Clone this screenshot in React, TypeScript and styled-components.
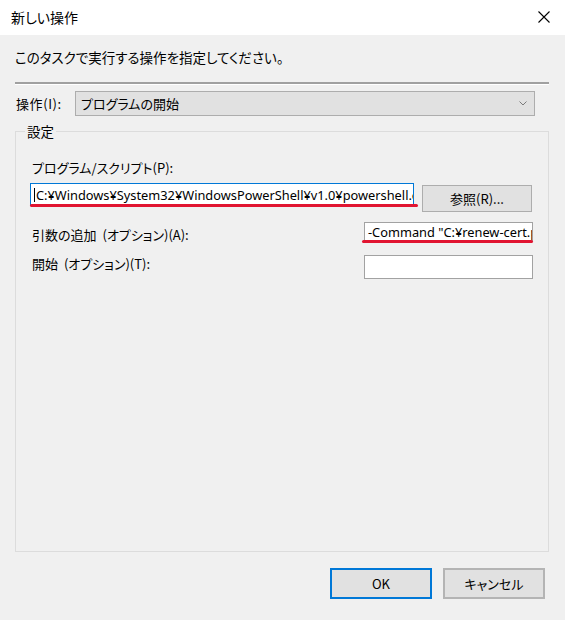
import React from "react";
import styled, { createGlobalStyle } from "styled-components";

const GlobalStyle = createGlobalStyle`
  html, body { margin: 0; padding: 0; background: #f0f0f0; }
  body {
    font-family: "Noto Sans CJK JP", "Noto Sans", sans-serif;
    font-feature-settings: "palt";
    color: #000;
  }
`;

const Window = styled.div`
  width: 565px;
  height: 620px;
  display: flex;
  flex-direction: column;
  background: #f0f0f0;
  overflow: hidden;
`;

const TitleBar = styled.div`
  height: 35px;
  flex: none;
  background: #fff;
  display: flex;
  align-items: center;
  justify-content: space-between;
  padding: 0 15px 2px 11px;
  box-sizing: border-box;
  font-size: 14px;
`;

const CloseIcon = styled.svg`
  width: 12px;
  height: 12px;
  display: block;
`;

const Body = styled.div`
  flex: 1;
  display: flex;
  flex-direction: column;
  padding: 0 16px 0 15px;
`;

const Instruction = styled.div`
  margin-top: 12px;
  line-height: 20px;
  font-size: 13.5px;
`;

const Separator = styled.div`
  margin-top: 15px;
  height: 0;
  border-top: 2px solid #a0a0a0;
  border-bottom: 1px solid #ffffff;
`;

const ActionRow = styled.div`
  margin-top: 6px;
  display: flex;
  align-items: center;
  padding: 0 14px 0 1px;
`;

const Label = styled.span<{ $offset?: number }>`
  font-size: 13px;
  line-height: 18px;
  white-space: nowrap;
  word-spacing: 3px;
  margin-top: ${(p) => p.$offset ?? 0}px;
`;

const ActionLabel = styled(Label)`
  width: 59px;
  flex: none;
  letter-spacing: 0.6px;
`;

const Combo = styled.div`
  flex: 1;
  height: 25px;
  box-sizing: border-box;
  border: 1px solid #adadad;
  background: #e1e1e1;
  display: flex;
  align-items: center;
  justify-content: space-between;
  padding: 0 7px 0 5px;
  font-size: 13px;
`;

const Chevron = styled.svg`
  width: 8px;
  height: 5px;
  display: block;
`;

const Group = styled.div`
  position: relative;
  margin-top: 15px;
  height: 421px;
  box-sizing: border-box;
  border: 1px solid #dcdcdc;
  padding: 27px 15px 0 14px;
  display: flex;
  flex-direction: column;
`;

const Legend = styled.span`
  position: absolute;
  top: -10px;
  left: 9px;
  padding: 0 2px;
  background: #f0f0f0;
  font-size: 13.5px;
  line-height: 18px;
`;

const FieldLabel = styled(Label)`
  padding-left: 2px;
  margin-bottom: 6px;
`;

const Row = styled.div<{ $gap?: number }>`
  display: flex;
  align-items: flex-start;
  justify-content: space-between;
  margin-top: ${(p) => p.$gap ?? 0}px;
`;

const RowLabel = styled(Label)`
  padding-left: 2px;
`;

const Field = styled.div<{ $w: number; $h: number; $focused?: boolean }>`
  position: relative;
  width: ${(p) => p.$w}px;
  height: ${(p) => p.$h}px;
  box-sizing: border-box;
  border: 1px solid ${(p) => (p.$focused ? "#0078d7" : "#a2a2a2")};
  background: #fff;
  display: flex;
  align-items: center;
  padding-left: 3px;
  overflow: hidden;
  white-space: nowrap;
  font-family: "Noto Sans", "Noto Sans CJK JP", sans-serif;
  font-feature-settings: normal;
  font-size: 12.8px;
`;

const Marked = styled.div<{ $extend?: number; $left?: number }>`
  position: relative;
  &::after {
    content: "";
    position: absolute;
    left: ${(p) => p.$left ?? 0}px;
    right: -${(p) => p.$extend ?? 0}px;
    bottom: -1px;
    height: 3px;
    border-radius: 2px;
    background: #e11531;
  }
`;

const Caret = styled.span`
  display: inline-block;
  width: 1px;
  height: 14px;
  background: #000;
  margin-right: 1px;
  flex: none;
`;

const PushButton = styled.button<{ $w: number; $h: number; $default?: boolean }>`
  width: ${(p) => p.$w}px;
  height: ${(p) => p.$h}px;
  box-sizing: border-box;
  border: ${(p) => (p.$default ? "2px solid #0078d7" : "2px solid #b4b4b4")};
  background: #e1e1e1;
  font-family: "Noto Sans CJK JP", "Noto Sans", sans-serif;
  font-feature-settings: "palt";
  font-size: 13px;
  color: #000;
  padding: 0;
  margin: 0;
  display: flex;
  align-items: center;
  justify-content: center;
`;

const BrowseButton = styled(PushButton)`
  margin-top: 2px;
  margin-right: 1px;
  border-width: 1px;
  border-color: #adadad;
`;

const Footer = styled.div`
  margin-top: 16px;
  display: flex;
  justify-content: flex-end;
  gap: 11px;
  padding-right: 4px;
`;

export default function App() {
  return (
    <>
      <GlobalStyle />
      <Window>
        <TitleBar>
          <span>新しい操作</span>
          <CloseIcon viewBox="0 0 12 12">
            <path d="M0.5 0.5 L11.5 11.5 M11.5 0.5 L0.5 11.5" stroke="#000" strokeWidth="1.1" fill="none" />
          </CloseIcon>
        </TitleBar>
        <Body>
          <Instruction>このタスクで実行する操作を指定してください。</Instruction>
          <Separator />
          <ActionRow>
            <ActionLabel>操作(I):</ActionLabel>
            <Combo>
              <span>プログラムの開始</span>
              <Chevron viewBox="0 0 8 5">
                <path d="M0.5 0.5 L4 4 L7.5 0.5" stroke="#7a7a7a" strokeWidth="1" fill="none" />
              </Chevron>
            </Combo>
          </ActionRow>
          <Group>
            <Legend>設定</Legend>
            <FieldLabel>プログラム/スクリプト(P):</FieldLabel>
            <Row>
              <Marked $extend={4}>
                <Field $w={384} $h={23} $focused>
                  <Caret />
                  C:¥Windows¥System32¥WindowsPowerShell¥v1.0¥powershell.exe
                </Field>
              </Marked>
              <BrowseButton $w={110} $h={27}>参照(R)...</BrowseButton>
            </Row>
            <Row $gap={10}>
              <RowLabel $offset={4}>引数の追加 (オプション)(A):</RowLabel>
              <Marked $left={-2}>
                <Field $w={169} $h={20}>-Command "C:¥renew-cert.ps1"</Field>
              </Marked>
            </Row>
            <Row $gap={11}>
              <RowLabel>開始 (オプション)(T):</RowLabel>
              <Field $w={169} $h={24} />
            </Row>
          </Group>
          <Footer>
            <PushButton $w={102} $h={31} $default>OK</PushButton>
            <PushButton $w={102} $h={31}>キャンセル</PushButton>
          </Footer>
        </Body>
      </Window>
    </>
  );
}
